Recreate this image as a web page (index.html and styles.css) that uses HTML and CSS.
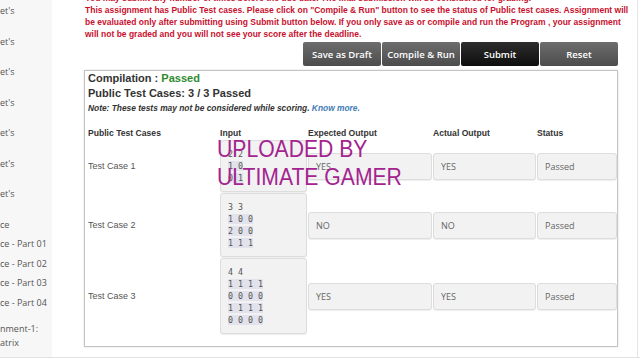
FILE: index.html
```html
<!DOCTYPE html>
<html lang="en">
<head>
  <meta charset="UTF-8">
  <title>Programming Assignment</title>
  <link rel="stylesheet" href="styles.css">
</head>
<body>
  <div class="page">
    <!-- menu da semana (cortado a esquerda) -->
    <div class="sidebar">
      <div class="side-tall">
        <div class="side-item">et's</div>
        <div class="side-item">et's</div>
        <div class="side-item">et's</div>
        <div class="side-item">et's</div>
        <div class="side-item">et's</div>
        <div class="side-item">et's</div>
        <div class="side-item">et's</div>
      </div>
      <div class="side-short">
        <div class="side-item">ce</div>
        <div class="side-item">ce - Part 01</div>
        <div class="side-item">ce - Part 02</div>
        <div class="side-item">ce - Part 03</div>
        <div class="side-item">ce - Part 04</div>
      </div>
      <div class="side-multi">nment-1:<br>atrix</div>
    </div>

    <div class="main">
      <p class="notice">
        You may submit any number of times before the due date. The final submission will be considered for grading.<br>
        This assignment has Public Test cases. Please click on "Compile &amp; Run" button to see the status of Public test cases. Assignment will<br>
        be evaluated only after submitting using Submit button below. If you only save as or compile and run the Program , your assignment<br>
        will not be graded and you will not see your score after the deadline.
      </p>

      <div class="actions">
        <button class="btn">Save as Draft</button>
        <button class="btn">Compile &amp; Run</button>
        <button class="btn btn-submit">Submit</button>
        <button class="btn">Reset</button>
      </div>

      <div class="result-box">
        <h3 class="result-title">Compilation : <span class="ok">Passed</span></h3>
        <h3 class="result-title">Public Test Cases: 3 / 3 Passed</h3>
        <p class="note">Note: These tests may not be considered while scoring. <a href="#">Know more.</a></p>

        <div class="cases" id="cases">
          <div class="th">Public Test Cases</div>
          <div class="th">Input</div>
          <div class="th">Expected Output</div>
          <div class="th">Actual Output</div>
          <div class="th">Status</div>
        </div>
      </div>

      <div class="watermark">UPLOADED BY<br>ULTIMATE GAMER</div>
    </div>

    <div class="rail"></div>
  </div>

  <script>
    const testCases = [
      { name: 'Test Case 1', input: ['2 2', '1 0', '0 1'], expected: 'YES', actual: 'YES', status: 'Passed' },
      { name: 'Test Case 2', input: ['3 3', '1 0 0', '2 0 0', '1 1 1'], expected: 'NO', actual: 'NO', status: 'Passed' },
      { name: 'Test Case 3', input: ['4 4', '1 1 1 1', '0 0 0 0', '1 1 1 1', '0 0 0 0'], expected: 'YES', actual: 'YES', status: 'Passed' }
    ];

    function renderCases() {
      const grid = document.getElementById('cases');
      testCases.forEach(tc => {
        const lines = tc.input.map((l, i) =>
          `<div class="in-line"><span class="${i > 0 ? 'hl' : ''}">${l}</span></div>`).join('');
        grid.insertAdjacentHTML('beforeend', `
          <div class="td-name">${tc.name}</div>
          <div class="cell cell-input">${lines}</div>
          <div class="cell">${tc.expected}</div>
          <div class="cell">${tc.actual}</div>
          <div class="cell cell-last">${tc.status}</div>
        `);
      });
    }

    renderCases();
  </script>
</body>
</html>
```

FILE: styles.css
```css
* {
  margin: 0;
  padding: 0;
  box-sizing: border-box;
}

body {
  background: #fff;
  font-family: "Liberation Sans", Arial, sans-serif;
  overflow: hidden;
}

.page {
  display: flex;
  height: 358px;
  border-bottom: 1px solid #e2e2e2;
  overflow: hidden;
}

/* sidebar */
.sidebar {
  width: 52px;
  flex-shrink: 0;
  background: #f7f7f7;
  font-family: "Open Sans", sans-serif;
  font-size: 9px;
  color: #555;
  white-space: nowrap;
  overflow: hidden;
}

.side-tall {
  margin-top: -4px;
}

.side-tall .side-item {
  height: 30.5px;
  line-height: 30.5px;
}

.side-short {
  margin-top: 5px;
}

.side-short .side-item {
  height: 19.5px;
  line-height: 19.5px;
}

.side-multi {
  margin-top: 10px;
  line-height: 14px;
}

/* main column */
.main {
  position: relative;
  width: 534px;
  margin-left: 32px;
  flex-shrink: 0;
}

.notice {
  margin-top: -8px;
  margin-left: 1px;
  font-size: 8.5px;
  line-height: 12px;
  font-weight: bold;
  color: #c8102e;
  white-space: nowrap;
}

.actions {
  display: flex;
  justify-content: flex-end;
  gap: 1px;
  margin-top: 2px;
}

.btn {
  width: 78px;
  height: 24px;
  border: none;
  border-radius: 2px;
  background: linear-gradient(#6d6d6d, #4c4c4c);
  color: #fff;
  font-family: "Open Sans", sans-serif;
  font-size: 9.5px;
  font-weight: 600;
  cursor: pointer;
}

.btn-submit {
  background: linear-gradient(#2e2e2e, #0d0d0d);
}

.result-box {
  margin-top: 4px;
  height: 277px;
  border: 1px solid #c4c4c4;
  box-shadow: 0 0 2px #ddd;
  padding: 0 0 0 3px;
  color: #333;
}

.result-title {
  font-size: 11px;
  line-height: 15px;
  font-weight: bold;
}

.ok {
  color: #2e8b2e;
}

.note {
  font-size: 8.4px;
  line-height: 14px;
  font-style: italic;
  font-weight: bold;
  color: #333;
}

.note a {
  color: #3f7cb5;
  text-decoration: none;
}

/* tabela dos casos */
.cases {
  display: grid;
  grid-template-columns: 132px 88px 125px 104px 80px;
  row-gap: 1px;
  align-items: center;
  margin-top: 12px;
}

.th {
  font-size: 8.6px;
  font-weight: bold;
  line-height: 12px;
  color: #333;
}

.td-name {
  font-size: 9px;
  color: #555;
}

.cell {
  margin-right: 1px;
  height: 27px;
  padding: 0 7px;
  display: flex;
  align-items: center;
  background: #f2f2f2;
  border: 1px solid #ddd;
  border-radius: 3px;
  box-shadow: 0 1px 1px #eee;
  font-family: "Open Sans", sans-serif;
  font-size: 9px;
  color: #666;
}

.cell-last {
  margin-right: 0;
}

.cell-input {
  height: auto;
  display: block;
  padding: 7px 7px;
  font-family: "DejaVu Sans Mono", monospace;
  font-size: 8.3px;
  line-height: 12px;
  color: #555;
}

.in-line {
  height: 12px;
}

.hl {
  background: #e2e2ec;
}

.watermark {
  position: absolute;
  left: 133px;
  top: 135px;
  font-family: "Liberation Sans", Arial, sans-serif;
  font-size: 23.5px;
  line-height: 28px;
  color: #a4248f;
  transform: scaleX(0.9);
  transform-origin: left top;
  white-space: nowrap;
}

.rail {
  margin-left: 19px;
  width: 1px;
  background: #e6e6e6;
}
```
